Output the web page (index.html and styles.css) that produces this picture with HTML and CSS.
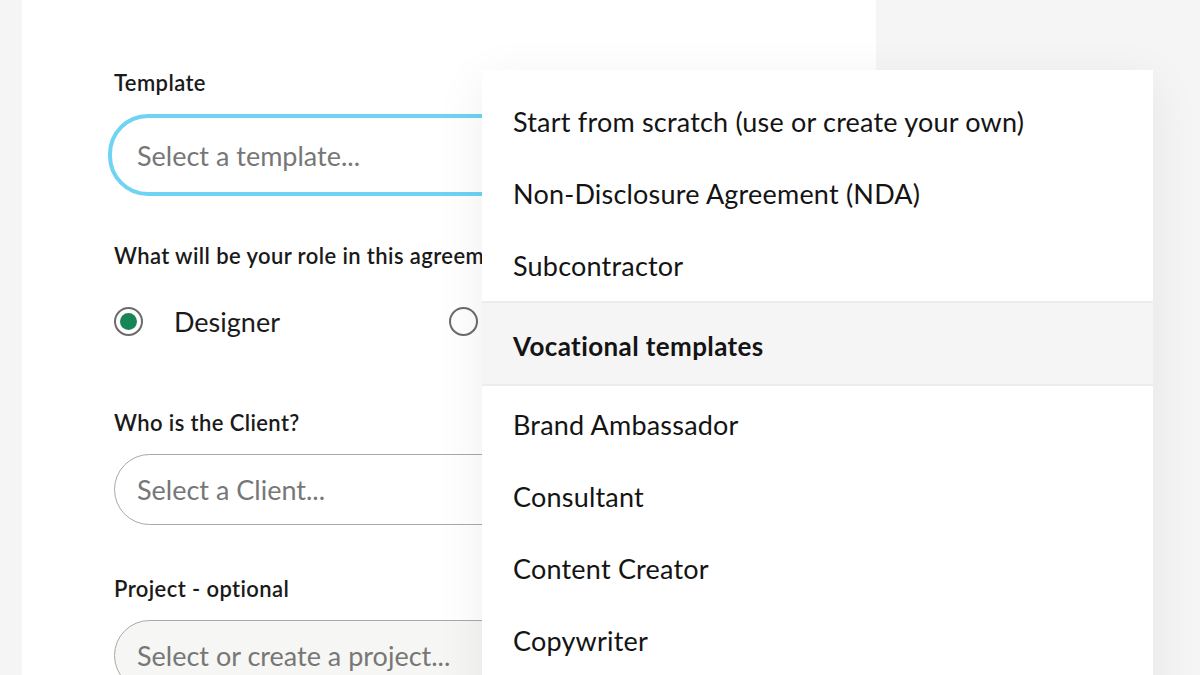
FILE: index.html
```html
<!DOCTYPE html>
<html lang="en">
  <head>
    <meta charset="UTF-8" />
    <meta name="viewport" content="width=device-width, initial-scale=1.0" />
    <title>New Agreement</title>
    <link rel="stylesheet" href="styles.css">
  </head>
  <body>
    <div class="agreement-form">
      <form id="agreementForm">
        <div class="field">
          <label class="field-label">Template</label>
          <div class="select-box focused">Select a template...</div>
        </div>

        <div class="field">
          <label class="field-label">What will be your role in this agreement?</label>
          <div class="role-options">
            <label class="radio-option">
              <span class="radio checked"></span>
              <span>Designer</span>
            </label>
            <label class="radio-option">
              <span class="radio"></span>
              <span>Client</span>
            </label>
          </div>
        </div>

        <div class="field client-field">
          <label class="field-label">Who is the Client?</label>
          <div class="select-box">Select a Client...</div>
        </div>

        <div class="field">
          <label class="field-label">Project - optional</label>
          <div class="select-box muted">Select or create a project...</div>
        </div>
      </form>
    </div>

    <ul class="template-menu">
      <li class="menu-item">Start from scratch (use or create your own)</li>
      <li class="menu-item">Non-Disclosure Agreement (NDA)</li>
      <li class="menu-item">Subcontractor</li>
      <li class="menu-group">Vocational templates</li>
      <li class="menu-item">Brand Ambassador</li>
      <li class="menu-item">Consultant</li>
      <li class="menu-item">Content Creator</li>
      <li class="menu-item">Copywriter</li>
      <li class="menu-item">Designer</li>
    </ul>
  </body>
</html>
```

FILE: styles.css
```css
body {
  font-family: Lato, "Open Sans", sans-serif;
  background-color: #f5f5f5;
  margin: 0;
  height: 100vh;
  overflow: hidden;
  position: relative;
  color: #1a1a1a;
}
.agreement-form {
  background-color: #ffffff;
  margin-left: 22px;
  width: 854px;
  height: 100vh;
  overflow: hidden;
  box-sizing: border-box;
  padding: 69px 0 0 92px;
}
.field {
  margin-bottom: 46px;
}
.client-field {
  margin-bottom: 50px;
}
.field-label {
  display: block;
  font-size: 22px;
  font-weight: 600;
  letter-spacing: 0.4px;
  margin-bottom: 18px;
  white-space: nowrap;
}
.select-box {
  width: 700px;
  height: 71px;
  box-sizing: border-box;
  border: 1.5px solid #a9a9a9;
  border-radius: 40px;
  padding-left: 22px;
  display: flex;
  align-items: center;
  font-size: 27px;
  color: #777777;
}
.select-box.focused {
  border: 4px solid #6fd3f4;
  height: 82px;
  margin-left: -6px;
  padding-left: 25px;
}
.select-box.muted {
  background-color: #f6f6f4;
}
.role-options {
  display: flex;
  margin-top: 36px;
  margin-bottom: 71px;
}
.radio-option {
  display: flex;
  align-items: center;
  gap: 31px;
  width: 335px;
  font-size: 27px;
  color: #1a1a1a;
}
.radio {
  width: 29px;
  height: 29px;
  box-sizing: border-box;
  border: 2px solid #6b6b6b;
  border-radius: 50%;
  display: flex;
  align-items: center;
  justify-content: center;
}
.radio.checked::after {
  content: "";
  width: 17px;
  height: 17px;
  border-radius: 50%;
  background-color: #178556;
}
.template-menu {
  position: absolute;
  top: 70px;
  left: 482px;
  width: 671px;
  margin: 0;
  padding: 15px 0 0;
  list-style: none;
  background-color: #ffffff;
  box-shadow: 0 12px 48px rgba(0, 0, 0, 0.07);
}
.menu-item {
  height: 72px;
  display: flex;
  align-items: center;
  padding-left: 31px;
  font-size: 27px;
  letter-spacing: 0.2px;
  color: #141414;
}
.menu-group {
  height: 85px;
  box-sizing: border-box;
  margin-bottom: 2px;
  display: flex;
  align-items: center;
  padding: 4px 0 0 31px;
  font-size: 26px;
  font-weight: 700;
  letter-spacing: 0.4px;
  color: #141414;
  background-color: #f5f5f5;
  border-top: 2px solid #ececec;
  border-bottom: 2px solid #ececec;
}
```
